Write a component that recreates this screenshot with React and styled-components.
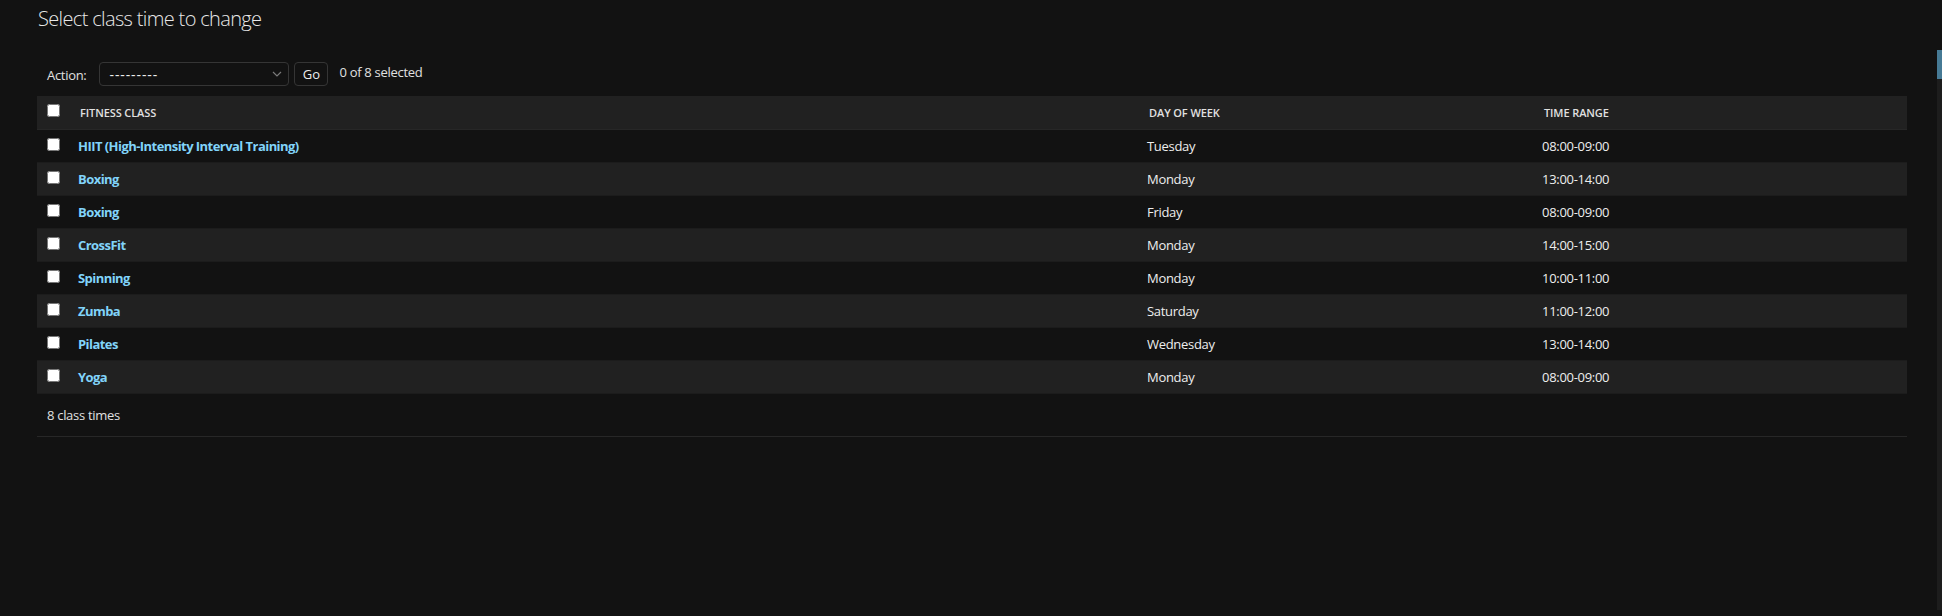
import React from 'react';
import styled, { createGlobalStyle } from 'styled-components';

const GlobalStyle = createGlobalStyle`
  html, body {
    margin: 0;
    padding: 0;
    background: #121212;
    color: #eeeeee;
    font-family: "Open Sans", "Noto Sans", sans-serif;
    font-size: 13px;
    letter-spacing: -0.3px;
  }
`;

const rows = [
  { id: 1, name: 'HIIT (High-Intensity Interval Training)', day: 'Tuesday', time: '08:00-09:00' },
  { id: 2, name: 'Boxing', day: 'Monday', time: '13:00-14:00' },
  { id: 3, name: 'Boxing', day: 'Friday', time: '08:00-09:00' },
  { id: 4, name: 'CrossFit', day: 'Monday', time: '14:00-15:00' },
  { id: 5, name: 'Spinning', day: 'Monday', time: '10:00-11:00' },
  { id: 6, name: 'Zumba', day: 'Saturday', time: '11:00-12:00' },
  { id: 7, name: 'Pilates', day: 'Wednesday', time: '13:00-14:00' },
  { id: 8, name: 'Yoga', day: 'Monday', time: '08:00-09:00' }
];

function App() {
  return (
    <>
      <GlobalStyle />
      <Content>
        <Title>Select class time to change</Title>
        <Actions>
          <ActionLabel>Action:</ActionLabel>
          <SelectWrap>
            <Select defaultValue="">
              <option value="">---------</option>
              <option value="delete">Delete selected class times</option>
            </Select>
            <Chevron width="10" height="6" viewBox="0 0 10 6">
              <path d="M1 1l4 4 4-4" fill="none" stroke="#7a7a7a" strokeWidth="1.2" />
            </Chevron>
          </SelectWrap>
          <GoButton type="button">Go</GoButton>
          <Counter>0 of 8 selected</Counter>
        </Actions>
        <Table>
          <thead>
            <tr>
              <HeadCell $w={31} $check>
                <Check type="checkbox" />
              </HeadCell>
              <HeadCell $w={1069}>Fitness class</HeadCell>
              <HeadCell $w={395}>Day of week</HeadCell>
              <HeadCell $w={375}>Time range</HeadCell>
            </tr>
          </thead>
          <tbody>
            {rows.map(row => {
              return (
                <Row key={row.id}>
                  <Cell $check>
                    <Check type="checkbox" />
                  </Cell>
                  <NameCell>
                    <ClassLink href="#">{row.name}</ClassLink>
                  </NameCell>
                  <Cell>{row.day}</Cell>
                  <Cell>{row.time}</Cell>
                </Row>
              );
            })}
          </tbody>
        </Table>
        <Paginator>8 class times</Paginator>
      </Content>
      <ScrollTrack>
        <ScrollThumb />
      </ScrollTrack>
    </>
  );
}

export default App;

const Content = styled.div`
  padding: 7px 35px 0 37px;
`;

const Title = styled.h1`
  margin: 0 0 21px 1px;
  font-size: 20px;
  line-height: 24px;
  font-weight: 300;
  letter-spacing: -0.65px;
  color: #e8e8e8;
`;

const Actions = styled.div`
  display: flex;
  align-items: center;
  padding: 10px;
  height: 24px;
  color: #e0e0e0;
`;

const ActionLabel = styled.label`
  font-size: 13px;
  margin-right: 13px;
  padding-top: 2px;
`;

const SelectWrap = styled.div`
  position: relative;
  width: 190px;
  height: 24px;
`;

const Select = styled.select`
  appearance: none;
  width: 100%;
  height: 24px;
  box-sizing: border-box;
  background: #121212;
  color: #eeeeee;
  border: 1px solid #353535;
  border-radius: 4px;
  font-family: inherit;
  font-size: 14px;
  letter-spacing: 0.9px;
  padding: 0 0 0 9px;
  margin: 0;
`;

const Chevron = styled.svg`
  position: absolute;
  right: 7px;
  top: 9px;
  pointer-events: none;
`;

const GoButton = styled.button`
  margin-left: 5px;
  height: 24px;
  width: 34px;
  box-sizing: border-box;
  padding: 0;
  font-family: inherit;
  font-size: 13px;
  line-height: 1;
  color: #eeeeee;
  background: #121212;
  border: 1px solid #353535;
  border-radius: 4px;
`;

const Counter = styled.span`
  margin-left: 11px;
  font-size: 13px;
  align-self: flex-start;
  line-height: 20px;
`;

const Table = styled.table`
  width: 1870px;
  border-collapse: collapse;
  table-layout: fixed;
`;

const HeadCell = styled.th`
  width: ${props => props.$w}px;
  box-sizing: border-box;
  height: 33px;
  padding: ${props => (props.$check ? '0 8px 0 10px' : '0 10px 0 12px')};
  background: #212121;
  color: #e0e0e0;
  font-size: 11px;
  font-weight: 600;
  letter-spacing: -0.1px;
  text-transform: uppercase;
  text-align: left;
  vertical-align: middle;
  border-bottom: 1px solid #272727;
  white-space: nowrap;
`;

const Row = styled.tr`
  &:nth-child(even) {
    background: #212121;
  }
`;

const Cell = styled.td`
  padding: ${props => (props.$check ? '8px 8px 8px 10px' : '8px 10px')};
  height: 16px;
  font-size: 13px;
  line-height: 16px;
  color: #eeeeee;
  vertical-align: top;
  border-bottom: 1px solid #1c1c1c;
  white-space: nowrap;
`;

const NameCell = styled(Cell)`
  font-weight: 700;
  letter-spacing: -0.55px;
`;

const ClassLink = styled.a`
  color: #81d4fa;
  text-decoration: none;
`;

const Check = styled.input`
  margin: 0;
  width: 13px;
  height: 13px;
  vertical-align: baseline;
`;

const Paginator = styled.div`
  padding: 10px;
  line-height: 22px;
  font-size: 13px;
  color: #e0e0e0;
  border-bottom: 1px solid #272727;
  width: 1850px;
`;

const ScrollTrack = styled.div`
  position: fixed;
  top: 50px;
  right: 0;
  width: 5px;
  height: 560px;
  background: #1d1d1d;
`;

const ScrollThumb = styled.div`
  height: 29px;
  background: #467a95;
`;
